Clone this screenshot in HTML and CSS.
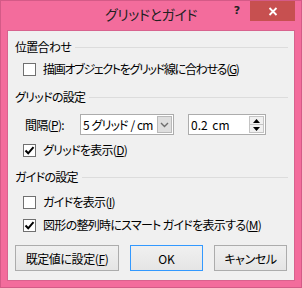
FILE: index.html
```html
<!DOCTYPE html>
<html lang="ja">
<head>
    <meta charset="UTF-8">
    <title>グリッドとガイド</title>
    <link rel="stylesheet" href="styles.css">
</head>
<body>
    <div class="window">
        <div class="titlebar">
            <span class="title">グリッドとガイド</span>
            <div class="caption-buttons">
                <span class="help">?</span>
                <span class="close">
                    <svg width="10" height="9" viewBox="0 0 10 9"><path d="M1.5 1 L8.5 8 M8.5 1 L1.5 8" stroke="#fff" stroke-width="1.8" fill="none"/></svg>
                </span>
            </div>
        </div>

        <div class="client">
            <div class="group-head head-snap"><span>位置合わせ</span><i class="rule"></i></div>
            <div class="check row-snap">
                <span class="box"></span>
                <span class="narrow">描画オブジェクトをグリッド線に合わせる(<u>G</u>)</span>
            </div>

            <div class="group-head head-grid"><span>グリッドの設定</span><i class="rule"></i></div>
            <div class="spacing-row">
                <span class="label">間隔(<u>P</u>):</span>
                <div class="combo">
                    <span class="combo-text">5 グリッド / cm</span>
                    <span class="combo-drop">
                        <svg width="9" height="6" viewBox="0 0 9 6"><path d="M1 1 L4.5 4.5 L8 1" stroke="#6d6d6d" stroke-width="1.4" fill="none"/></svg>
                    </span>
                </div>
                <div class="spin">
                    <span class="spin-text">0.2 cm</span>
                    <span class="spin-buttons">
                        <span class="spin-up"><svg width="7" height="4" viewBox="0 0 7 4"><path d="M0 4 L3.5 0 L7 4 Z" fill="#000"/></svg></span>
                        <span class="spin-down"><svg width="7" height="4" viewBox="0 0 7 4"><path d="M0 0 L7 0 L3.5 4 Z" fill="#000"/></svg></span>
                    </span>
                </div>
            </div>
            <div class="check row-showgrid">
                <span class="box"><svg width="11" height="11" viewBox="0 0 11 11"><path d="M1.5 5.5 L4.2 8.3 L9.5 2.2" stroke="#000" stroke-width="2" fill="none"/></svg></span>
                <span>グリッドを表示(<u>D</u>)</span>
            </div>

            <div class="group-head head-guide"><span>ガイドの設定</span><i class="rule"></i></div>
            <div class="check row-showguide">
                <span class="box"></span>
                <span>ガイドを表示(<u>I</u>)</span>
            </div>
            <div class="check row-smart">
                <span class="box"><svg width="11" height="11" viewBox="0 0 11 11"><path d="M1.5 5.5 L4.2 8.3 L9.5 2.2" stroke="#000" stroke-width="2" fill="none"/></svg></span>
                <span>図形の整列時にスマート ガイドを表示する(<u>M</u>)</span>
            </div>

            <div class="buttons">
                <button class="btn btn-default-set">既定値に設定(<u>F</u>)</button>
                <button class="btn btn-ok">OK</button>
                <button class="btn btn-cancel">キャンセル</button>
            </div>
        </div>
    </div>
</body>
</html>
```

FILE: styles.css
```css
body {
    margin: 0;
    font-family: "Noto Sans CJK JP", "Noto Sans", sans-serif;
    font-feature-settings: "palt";
    font-size: 12px;
    letter-spacing: -0.7px;
    color: #000;
}

.window {
    box-sizing: border-box;
    width: 302px;
    height: 288px;
    background: #f36c9c;
    border: 1px solid #d45a87;
    padding: 0 6px 6px;
    display: flex;
    flex-direction: column;
}

.titlebar {
    position: relative;
    height: 29px;
    flex: none;
    text-align: center;
}

.title {
    display: block;
    font-size: 14px;
    line-height: 27px;
    letter-spacing: -0.4px;
    color: #222;
}

.caption-buttons {
    position: absolute;
    top: 0;
    right: 0;
    display: flex;
}

.help {
    width: 26px;
    height: 20px;
    line-height: 20px;
    text-align: center;
    font-family: "DejaVu Sans", sans-serif;
    font-weight: bold;
    font-size: 11px;
    letter-spacing: 0;
    color: #222;
}

.close {
    width: 45px;
    height: 20px;
    background: #c75050;
    display: flex;
    align-items: center;
    justify-content: center;
}

.close svg {
    display: block;
}

.client {
    flex: 1;
    background: #f0f0f0;
    border: 1px solid #d8638e;
    padding: 8px 6px 0 7px;
}

u {
    text-decoration: underline;
    text-underline-offset: 1px;
}

.group-head {
    display: flex;
    align-items: center;
    height: 16px;
    line-height: 16px;
}

.group-head .rule {
    flex: 1;
    height: 1px;
    background: #dcdcdc;
    margin-left: 4px;
}

.head-grid { margin-top: 12px; }
.head-guide { margin-top: 11px; }

.check {
    display: flex;
    align-items: center;
    height: 16px;
    line-height: 16px;
    padding-left: 8px;
    white-space: nowrap;
}

.narrow {
    letter-spacing: -1.3px;
}

.row-snap { margin-top: 6px; }
.row-showgrid { margin-top: 7px; }
.row-showguide { margin-top: 9px; }
.row-smart { margin-top: 7px; }

.box {
    box-sizing: border-box;
    width: 13px;
    height: 13px;
    border: 1px solid #707070;
    background: #fff;
    margin-right: 7px;
    flex: none;
    display: flex;
    align-items: center;
    justify-content: center;
}

.box svg {
    display: block;
}

.spacing-row {
    display: flex;
    align-items: center;
    height: 21px;
    margin-top: 9px;
    padding-left: 10px;
}

.spacing-row .label {
    width: 55px;
}

.combo {
    box-sizing: border-box;
    width: 94px;
    height: 21px;
    border: 1px solid #acacac;
    background: #fff;
    display: flex;
    align-items: stretch;
}

.combo-text {
    flex: 1;
    padding-left: 2px;
    line-height: 19px;
    letter-spacing: -0.9px;
    word-spacing: 1px;
    white-space: nowrap;
    overflow: hidden;
}

.combo-drop {
    box-sizing: border-box;
    width: 15px;
    margin: 1px 1px 1px 0;
    background: #dedede;
    border: 1px solid #b9b9b9;
    display: flex;
    align-items: center;
    justify-content: center;
}

.spin {
    box-sizing: border-box;
    width: 78px;
    height: 21px;
    margin-left: 14px;
    border: 1px solid #acacac;
    background: #fff;
    display: flex;
}

.spin-text {
    flex: 1;
    padding-left: 2px;
    line-height: 19px;
    letter-spacing: 0;
    word-spacing: 2px;
}

.spin-buttons {
    width: 15px;
    margin: 1px 1px 1px 0;
    display: flex;
    flex-direction: column;
}

.spin-up,
.spin-down {
    box-sizing: border-box;
    flex: 1;
    border: 1px solid #c4c4c4;
    background: #f0f0f0;
    display: flex;
    align-items: center;
    justify-content: center;
}

.spin-down {
    border-top: none;
}

.buttons {
    display: flex;
    gap: 11px;
    margin-top: 12px;
}

.btn {
    box-sizing: border-box;
    height: 26px;
    width: 73px;
    padding: 0;
    font: inherit;
    letter-spacing: -0.4px;
    color: #000;
    border: 1px solid #acacac;
    background: linear-gradient(#f0f0f0, #e5e5e5);
}

.btn-default-set {
    width: 104px;
}

.btn-ok {
    border-color: #3399ff;
    letter-spacing: 0;
}
```
